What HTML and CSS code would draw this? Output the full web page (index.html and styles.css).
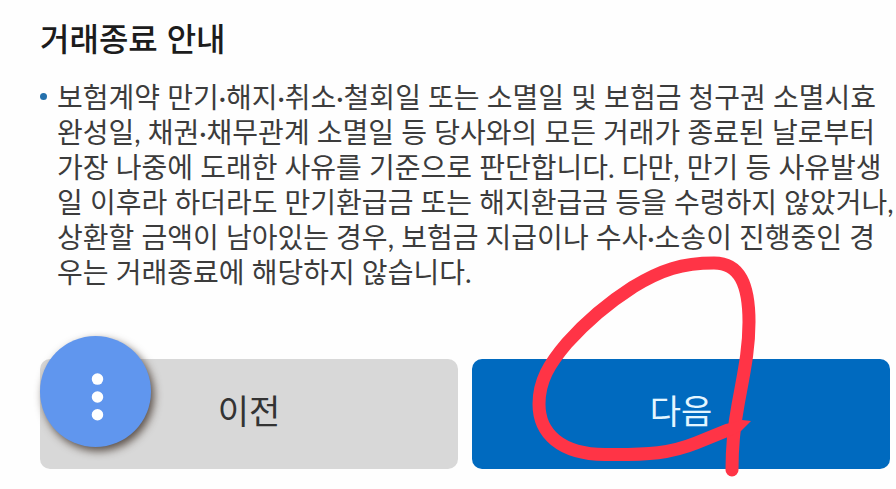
FILE: index.html
```
<!DOCTYPE html>
<html lang="ko">
<head>
<meta charset="utf-8">
<title>거래종료 안내</title>
<link rel="stylesheet" href="styles.css">
</head>
<body>
<main class="page">
  <h1 class="title">거래종료 안내</h1>
  <ul class="notes">
    <li class="note">보험계약 만기·해지·취소·철회일 또는 소멸일 및 보험금 청구권 소멸시효<br>완성일, 채권·채무관계 소멸일 등 당사와의 모든 거래가 종료된 날로부터<br>가장 나중에 도래한 사유를 기준으로 판단합니다. 다만, 만기 등 사유발생<br>일 이후라 하더라도 만기환급금 또는 해지환급금 등을 수령하지 않았거나,<br>상환할 금액이 남아있는 경우, 보험금 지급이나 수사·소송이 진행중인 경<br>우는 거래종료에 해당하지 않습니다.</li>
  </ul>
  <div class="actions">
    <div class="action">
      <button class="btn btn-prev" type="button">이전</button>
      <button class="fab" type="button" aria-label="메뉴">
        <svg class="fab-icon" viewBox="0 0 112 112" aria-hidden="true">
          <circle cx="58" cy="43.500" r="5.8"/><circle cx="58" cy="61.500" r="5.8"/><circle cx="58" cy="79.500" r="5.8"/>
        </svg>
      </button>
    </div>
    <div class="action">
      <button class="btn btn-next" type="button">다음</button>
      <svg class="marker" viewBox="500 240 300 249" aria-hidden="true">
        <path class="marker-line" d="M732 470C732 448 734 426 738 405C744 372 749 350 749 322C749 285 740 263 714 263C682 263 661 270 633 287C608 303 584 324 567 343C549 364 539 381 539 404C539 433 560 454 605 454.500C650 455 671 453 696 443L728 430"/>
        <path class="marker-tip" d="M728 424L742 420L751 421L741 431L728 437Z"/>
      </svg>
    </div>
  </div>
</main>
</body>
</html>
```
FILE: styles.css
```
* {
  box-sizing: border-box;
}

body {
  margin: 0;
  background: #fefefe;
  color: #3c3c3c;
  font-family: "Liberation Sans", "Noto Sans CJK KR", sans-serif;
}

.page {
  padding: 20px 6px 20px 40px;
}

.title {
  margin: 0 0 20px;
  color: #1c1c1c;
  font-size: 32px;
  font-weight: 500;
  line-height: 40px;
}

.notes {
  margin: 0;
  padding: 0;
  list-style: none;
}

.note {
  position: relative;
  padding-left: 17px;
  font-family: Lato, "Noto Sans CJK KR", sans-serif;
  font-size: 28px;
  line-height: 35px;
  white-space: nowrap;
}

.note::before {
  content: "";
  position: absolute;
  top: 13px;
  left: 0;
  width: 7px;
  height: 7px;
  border-radius: 50%;
  background: #2470ac;
}

.actions {
  display: flex;
  gap: 14px;
  margin-top: 69px;
}

.action {
  position: relative;
  flex: 1;
}

.btn {
  display: block;
  width: 100%;
  height: 110px;
  padding: 0 0 4px;
  border: 0;
  border-radius: 10px;
  font-family: inherit;
  font-size: 34px;
  line-height: 48px;
}

.btn-prev {
  background: #d8d8d8;
  color: #333;
}

.btn-next {
  background: #006abf;
  color: #e4f6ff;
}

.fab {
  position: absolute;
  top: -23px;
  left: 0;
  width: 111px;
  height: 111px;
  padding: 0;
  border: 0;
  border-radius: 50%;
  background: #6096ee;
  box-shadow: 3px 4px 8px rgba(50, 35, 25, 0.75);
}

.fab-icon {
  display: block;
  width: 100%;
  fill: #fff;
}

.marker {
  position: absolute;
  top: -119px;
  left: 28px;
  width: 300px;
  height: 249px;
  pointer-events: none;
}

.marker-line {
  fill: none;
  stroke: #ff3446;
  stroke-width: 13;
  stroke-linecap: round;
  stroke-linejoin: round;
}

.marker-tip {
  fill: #ff3446;
}
```
